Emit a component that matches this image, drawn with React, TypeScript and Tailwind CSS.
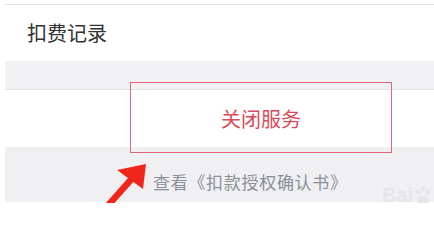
export default function App() {
  return (
    <div className="relative h-[203px] w-[434px] overflow-hidden bg-white font-['Noto_Sans_CJK_SC',sans-serif]">
      <div className="h-[4px]" />
      <div className="ml-[5px] border-t border-[#e4e4e6]" />
      {/* 扣费记录 row */}
      <div className="flex h-[56px] items-center pl-[27px] text-[20px] text-[#333333]">扣费记录</div>
      {/* spacer band */}
      <div className="ml-[5px] h-[29px] border-b border-[#e2e2e4] bg-[#f2f2f5]" />
      {/* button row */}
      <div className="flex h-[57px] items-center justify-center" />
      {/* footer */}
      <div className="ml-[5px] flex h-[55px] items-start bg-[#f0f0f3] pl-[148px] pt-[24px]">
        <span className="text-[17px] leading-[22px] tracking-[0.7px] text-[#8a8f98]">查看《扣款授权确认书》</span>
      </div>

      {/* red box around close button */}
      <div className="absolute left-[130px] top-[82px] flex h-[71px] w-[262px] items-center justify-center border-[1.5px] border-[#dc6876]">
        <span className="pt-[2px] text-[20px] text-[#d84a5c]">关闭服务</span>
      </div>

      {/* annotation arrow */}
      <svg className="absolute left-0 top-0" width="434" height="203" viewBox="0 0 434 203">
        <line x1="104" y1="210" x2="136" y2="174" stroke="#f0261b" strokeWidth="6.5" />
        <polygon points="117,170 146,164 143,189" fill="#f0261b" />
      </svg>

      {/* watermark */}
      <div className="absolute bottom-[-7px] right-[2px] flex items-end gap-[1px] font-['Liberation_Sans',sans-serif] text-[20px] font-bold text-[#e6e6ea]">
        <span>Bai</span>
        <svg width="18" height="24" viewBox="0 0 18 24">
          <circle cx="4" cy="6" r="2.5" fill="#e6e6ea" />
          <circle cx="9" cy="3" r="2.5" fill="#e6e6ea" />
          <circle cx="14" cy="6" r="2.5" fill="#e6e6ea" />
          <ellipse cx="9" cy="15" rx="6" ry="5" fill="#e6e6ea" />
        </svg>
      </div>
    </div>
  );
}
